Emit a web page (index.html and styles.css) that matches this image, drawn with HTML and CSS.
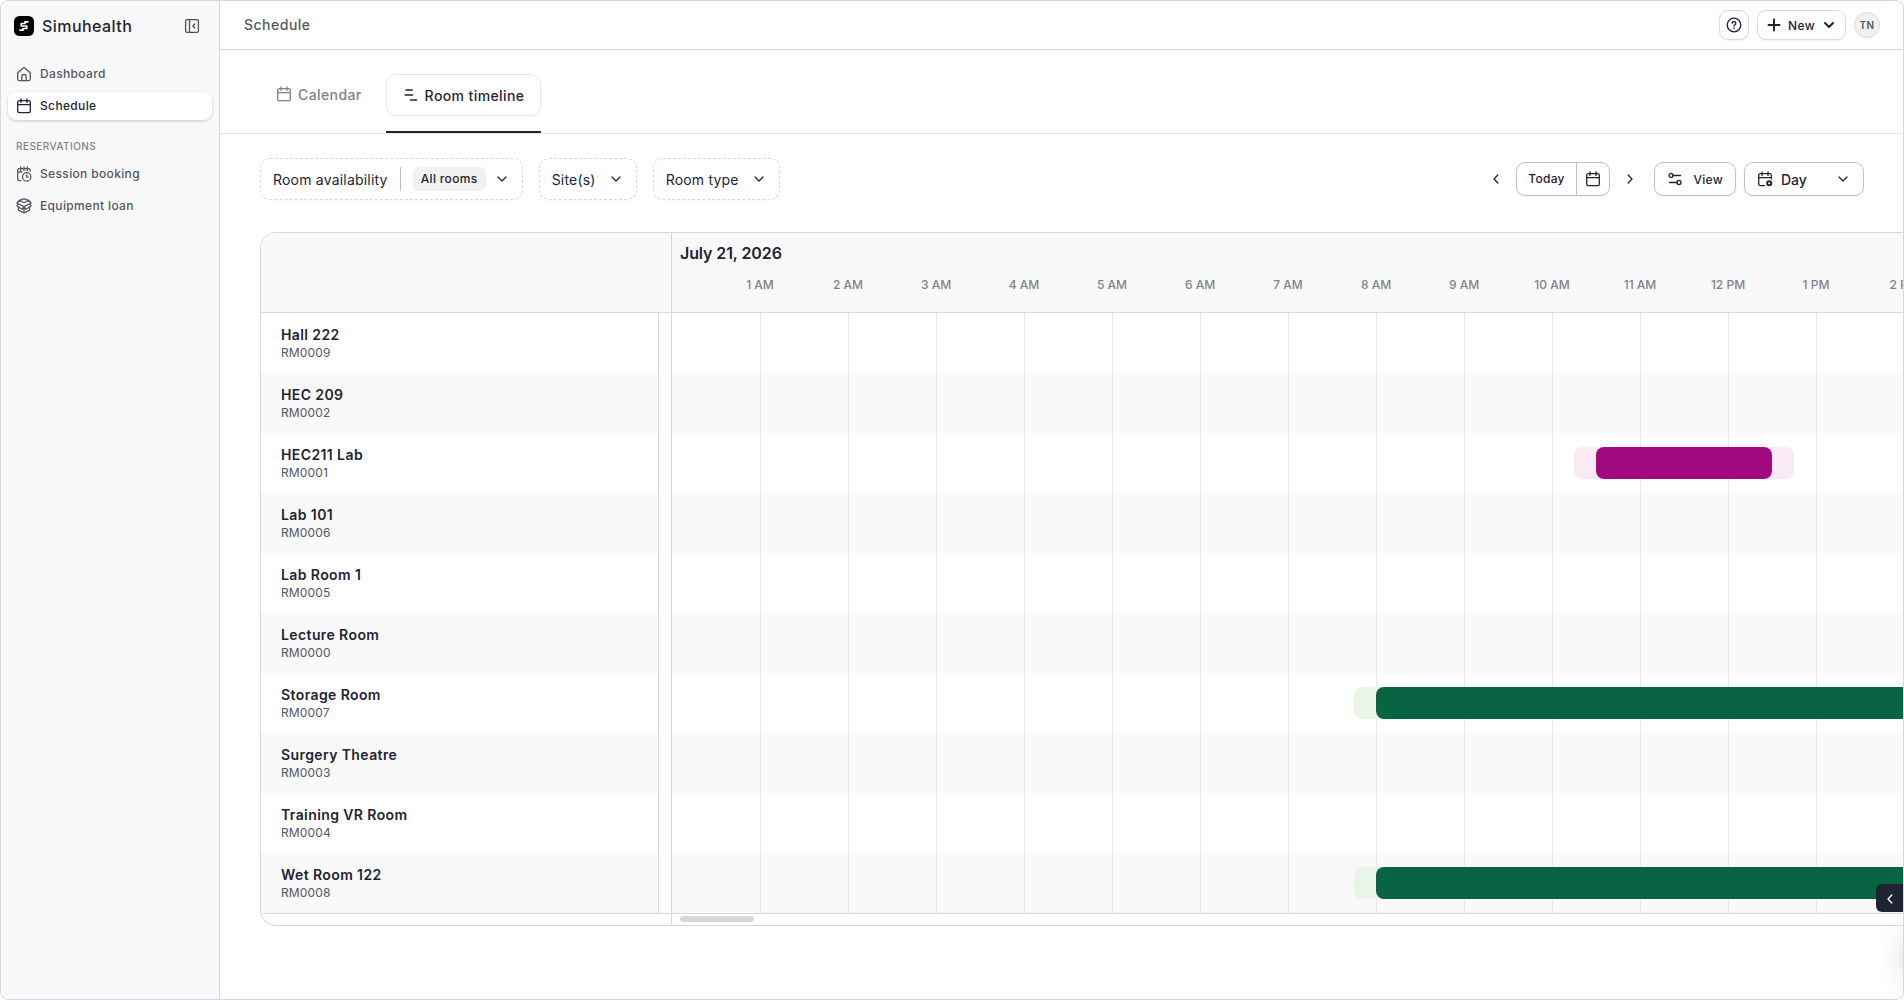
FILE: index.html
```html
<!DOCTYPE html>
<html lang="en">
<head>
  <meta charset="UTF-8">
  <meta name="viewport" content="width=device-width, initial-scale=1.0">
  <title>Schedule - Simuhealth</title>
  <link rel="stylesheet" href="styles.css">
</head>
<body>
  <!-- shared icons -->
  <svg class="icon-defs" width="0" height="0">
    <symbol id="icon-calendar" viewBox="0 0 16 16">
      <rect x="1.7" y="2.7" width="12.6" height="12" rx="1.6"/>
      <path d="M1.7 6.6h12.6M5 .8v3.6M11 .8v3.6"/>
    </symbol>
    <symbol id="icon-chevron-down" viewBox="0 0 16 16">
      <path d="M4 6l4 4 4-4"/>
    </symbol>
    <symbol id="icon-chevron-left" viewBox="0 0 16 16">
      <path d="M9.8 4L6 8l3.8 4"/>
    </symbol>
    <symbol id="icon-chevron-right" viewBox="0 0 16 16">
      <path d="M6.2 4L10 8l-3.8 4"/>
    </symbol>
  </svg>

  <div class="app">
    <aside class="sidebar">
      <div class="brand">
        <svg class="brand__logo" width="20" height="20" viewBox="0 0 20 20">
          <rect width="20" height="20" rx="5.5" fill="#000"/>
          <path d="M14.6 5.8h-3.6v1.700H7.300v2.500H12.700v2.500H9v1.700H5.400" fill="none" stroke="#fff" stroke-width="1.7" stroke-linejoin="round"/>
        </svg>
        <span class="brand__name">Simuhealth</span>
        <svg class="icon brand__toggle" width="16" height="16" viewBox="0 0 16 16">
          <rect x="1.6" y="1.6" width="12.8" height="12.8" rx="1.5"/>
          <path d="M5.500 1.600v12.800M10.800 6L8.800 8l2 2"/>
        </svg>
      </div>

      <nav class="nav">
        <a class="nav__item">
          <svg class="icon" width="16" height="16" viewBox="0 0 16 16">
            <path d="M1.700 6.800L8 1.400l6.300 5.400v6.300a1.500 1.500 0 0 1-1.500 1.500H3.200a1.500 1.500 0 0 1-1.500-1.500zM5.800 14.600v-4a2.200 2.200 0 0 1 4.400 0v4"/>
          </svg>
          <span>Dashboard</span>
        </a>
        <a class="nav__item nav__item--active">
          <svg class="icon" width="16" height="16"><use href="#icon-calendar"/></svg>
          <span>Schedule</span>
        </a>
        <div class="nav__title">RESERVATIONS</div>
        <a class="nav__item">
          <svg class="icon" width="16" height="16" viewBox="0 0 16 16">
            <path d="M4.800 14.600H3.200a1.500 1.500 0 0 1-1.500-1.500V4.200a1.500 1.500 0 0 1 1.500-1.500h9.600a1.500 1.500 0 0 1 1.500 1.500v1M1.700 6H6M4.700.8v3.600M8 .8v3.600M11.300.8v3.600"/>
            <circle cx="10.7" cy="10.9" r="4.2"/>
            <path d="M10.700 8.900v2.200h1.600"/>
          </svg>
          <span>Session booking</span>
        </a>
        <a class="nav__item">
          <svg class="icon" width="16" height="16" viewBox="0 0 16 16">
            <path d="M8 4.800L3.300 2.300.9 5l7.100 3.600L15.100 5l-2.400-2.700zM8 8.600l-1.800 2.600L.9 8l1.500-2M8 8.600l1.800 2.600L15.100 8l-1.500-2M2.400 9.200v3L8 15l5.600-2.800v-3M8 9v6M3.300 2.300L8 .9l4.700 1.400"/>
          </svg>
          <span>Equipment loan</span>
        </a>
      </nav>
    </aside>

    <main class="main">
      <header class="topbar">
        <h1 class="topbar__title">Schedule</h1>
        <div class="topbar__actions">
          <button class="btn btn--help">
            <svg class="icon" width="16" height="16" viewBox="0 0 16 16">
              <circle cx="8" cy="8" r="6.8"/>
              <path d="M6.200 6.300a1.800 1.800 0 1 1 2.600 1.600c-.6.3-.8.6-.8 1.200M8 11v.5"/>
            </svg>
          </button>
          <button class="btn btn--new">
            <svg class="icon icon--bold" width="16" height="16" viewBox="0 0 16 16"><path d="M8 2.500v11M2.500 8h11"/></svg>
            <span>New</span>
            <svg class="icon icon--bold" width="16" height="16"><use href="#icon-chevron-down"/></svg>
          </button>
          <div class="avatar">TN</div>
        </div>
      </header>

      <div class="tabs">
        <a class="tab">
          <span class="tab__label">
            <svg class="icon" width="16" height="16"><use href="#icon-calendar"/></svg>
            Calendar
          </span>
        </a>
        <a class="tab tab--active">
          <span class="tab__label">
            <svg class="icon icon--timeline" width="16" height="16" viewBox="0 0 16 16"><path d="M3 3h6.200M2.300 8h7.200M7.500 13h6"/></svg>
            Room timeline
          </span>
        </a>
      </div>

      <div class="toolbar">
        <div class="filters">
          <div class="filter">
            <span>Room availability</span>
            <span class="filter__divider"></span>
            <span class="filter__value">All rooms</span>
            <svg class="icon" width="16" height="16"><use href="#icon-chevron-down"/></svg>
          </div>
          <div class="filter">
            <span>Site(s)</span>
            <svg class="icon" width="16" height="16"><use href="#icon-chevron-down"/></svg>
          </div>
          <div class="filter">
            <span>Room type</span>
            <svg class="icon" width="16" height="16"><use href="#icon-chevron-down"/></svg>
          </div>
        </div>
        <div class="controls">
          <button class="arrow"><svg class="icon" width="16" height="16"><use href="#icon-chevron-left"/></svg></button>
          <div class="control control--date">
            <span class="control__today">Today</span>
            <span class="control__picker"><svg class="icon" width="16" height="16"><use href="#icon-calendar"/></svg></span>
          </div>
          <button class="arrow"><svg class="icon" width="16" height="16"><use href="#icon-chevron-right"/></svg></button>
          <button class="control control--view">
            <svg class="icon" width="16" height="16" viewBox="0 0 16 16">
              <circle cx="4" cy="4.5" r="2"/>
              <circle cx="12" cy="11.5" r="2"/>
              <path d="M6 4.500h7.500M2.500 11.500H10"/>
            </svg>
            <span>View</span>
          </button>
          <button class="control control--range">
            <svg class="icon" width="16" height="16" viewBox="0 0 16 16">
              <path d="M7.500 14.600H3.200a1.500 1.500 0 0 1-1.500-1.500V4.200a1.500 1.500 0 0 1 1.500-1.500h9.600a1.500 1.500 0 0 1 1.500 1.500V8M1.700 6.600h12.600M5 .8v3.600M11 .8v3.600"/>
              <circle cx="12.2" cy="12.3" r="2" stroke-width="2"/>
            </svg>
            <span>Day</span>
            <svg class="icon control__caret" width="16" height="16"><use href="#icon-chevron-down"/></svg>
          </button>
        </div>
      </div>

      <section class="timeline">
        <div class="timeline__rooms">
          <div class="timeline__corner"></div>
          <div class="rooms" id="rooms"></div>
          <div class="timeline__foot"></div>
        </div>
        <div class="timeline__grid">
          <div class="timeline__head">
            <div class="timeline__date">July 21, 2026</div>
            <div class="hours" id="hours"></div>
          </div>
          <div class="lanes" id="lanes"></div>
          <div class="timeline__foot"><div class="scroll-thumb"></div></div>
        </div>
      </section>
    </main>

    <button class="drawer-toggle"><svg class="icon" width="16" height="16"><use href="#icon-chevron-left"/></svg></button>
    <div class="widget-shadow"></div>
  </div>

  <script src="script.js"></script>
</body>
</html>
```
FILE: styles.css
```css
* {
  box-sizing: border-box;
}

body {
  margin: 0;
  background: #fff;
  font-family: Inter, "Liberation Sans", sans-serif;
  font-size: 14px;
  color: #1f2433;
}

button {
  font: inherit;
  color: inherit;
  background: #fff;
  padding: 0;
}

.icon-defs {
  position: absolute;
}

.icon {
  flex: none;
  fill: none;
  stroke: currentColor;
  stroke-width: 1.3;
  stroke-linecap: round;
  stroke-linejoin: round;
}

.icon--bold {
  stroke-width: 2;
}

.icon--timeline {
  stroke-width: 1.6;
}

.app {
  position: relative;
  display: flex;
  height: 1000px;
  border: 1px solid #d7d8dd;
  border-radius: 8px;
  overflow: hidden;
}

/* Sidebar */
.sidebar {
  width: 219px;
  flex: none;
  background: #f9f9f9;
  border-right: 1px solid #d7d8dc;
}

.brand {
  display: flex;
  align-items: center;
  height: 50px;
  padding: 0 19px 0 13px;
}

.brand__name {
  margin-left: 8px;
  font-size: 16px;
  font-weight: 500;
  letter-spacing: 0.45px;
}

.brand__toggle {
  margin-left: auto;
  color: #4a4f5e;
}

.nav {
  display: flex;
  flex-direction: column;
  gap: 4px;
  padding: 9px 7px 0 7px;
}

.nav__item {
  display: flex;
  align-items: center;
  gap: 8px;
  height: 28px;
  padding: 0 8px;
  border-radius: 8px;
  font-size: 12px;
  font-weight: 500;
  letter-spacing: 0.35px;
  color: #535763;
}

.nav__item span {
  padding-bottom: 1px;
}

.nav__item--active {
  background: #fff;
  color: #1f2433;
  box-shadow: 0 1px 3px rgba(0, 0, 0, 0.2);
}

.nav__title {
  height: 30px;
  padding: 12px 8px 0;
  margin-bottom: 2px;
  font-size: 10px;
  line-height: 20px;
  font-weight: 500;
  letter-spacing: 0.45px;
  color: #7e828d;
}

/* Top bar */
.main {
  flex: 1;
  min-width: 0;
}

.topbar {
  display: flex;
  align-items: center;
  justify-content: space-between;
  height: 49px;
  padding: 0 23px 0 24px;
  border-bottom: 1px solid #d7d8dc;
}

.topbar__title {
  margin: 0 0 1px;
  font-size: 14px;
  font-weight: 500;
  letter-spacing: 0.5px;
  color: #535763;
}

.topbar__actions {
  display: flex;
  align-items: center;
  gap: 8px;
}

.btn {
  display: flex;
  align-items: center;
  justify-content: center;
  height: 30px;
  border: 1px solid #d9dade;
  border-radius: 9px;
  box-shadow: 0 1px 2px rgba(0, 0, 0, 0.05);
}

.btn--help {
  width: 30px;
}

.btn--new {
  width: 89px;
  gap: 6px;
  font-size: 12px;
  font-weight: 500;
  letter-spacing: 0.3px;
}

.avatar {
  width: 26px;
  height: 26px;
  border: 1px solid #d9dade;
  border-radius: 50%;
  background: #f1f1f1;
  font-size: 10px;
  line-height: 25px;
  font-weight: 600;
  letter-spacing: 0.3px;
  text-align: center;
  color: #535763;
}

/* Tabs */
.tabs {
  display: flex;
  height: 84px;
  padding: 24px 40px 0;
  border-bottom: 1px solid #e8e8ea;
}

.tab {
  height: 59px;
  color: #7e828d;
}

.tab__label {
  display: flex;
  align-items: center;
  gap: 6px;
  height: 40px;
  padding: 0 24px 0 16px;
  font-weight: 500;
  letter-spacing: 0.4px;
}

.tab--active {
  border-bottom: 2px solid #1f2433;
  color: #1f2433;
}

.tab--active .tab__label {
  height: 42px;
  padding: 0 16px;
  border: 1px solid #e8e8ea;
  border-radius: 10px;
  box-shadow: 0 1px 2px rgba(0, 0, 0, 0.05);
}

/* Filters and date controls */
.toolbar {
  display: flex;
  justify-content: space-between;
  align-items: flex-start;
  height: 98px;
  padding: 24px 39px 0 40px;
}

.filters {
  display: flex;
  gap: 16px;
}

.filter {
  display: flex;
  align-items: center;
  gap: 12px;
  height: 42px;
  padding: 0 12px;
  border: 1px dashed #d7d8dc;
  border-radius: 10px;
  letter-spacing: 0.2px;
  box-shadow: 0 1px 2px rgba(0, 0, 0, 0.04);
}

.filter__divider {
  width: 1px;
  height: 24px;
  background: #c0c1c8;
}

.filter__value {
  height: 24px;
  padding: 0 8px;
  margin-right: -4px;
  border-radius: 6px;
  background: #f1f1f1;
  font-size: 12px;
  line-height: 24px;
  font-weight: 500;
  letter-spacing: 0.36px;
}

.controls {
  display: flex;
  align-items: center;
  height: 42px;
}

.arrow {
  display: flex;
  justify-content: center;
  width: 40px;
  border: 0;
}

.control {
  display: flex;
  align-items: center;
  height: 34px;
  border: 1px solid #c0c1c8;
  border-radius: 9px;
  font-size: 12px;
  font-weight: 500;
  letter-spacing: 0.3px;
  box-shadow: 0 1px 2px rgba(0, 0, 0, 0.05);
}

.control__today {
  width: 60px;
  height: 32px;
  line-height: 32px;
  text-align: center;
  border-right: 1px solid #c0c1c8;
}

.control__picker {
  display: flex;
  justify-content: center;
  width: 32px;
}

.control--view {
  width: 82px;
  margin-left: 4px;
  padding: 0 12px;
  justify-content: space-between;
}

.control--range {
  width: 120px;
  margin-left: 8px;
  padding: 0 12px;
  gap: 8px;
  font-size: 14px;
  letter-spacing: 0;
}

.control__caret {
  margin-left: auto;
}

/* Timeline */
.timeline {
  display: flex;
  height: 694px;
  margin-left: 40px;
  border: 1px solid #d7d8dc;
  border-right: 0;
  border-radius: 16px 0 0 16px;
  overflow: hidden;
}

.timeline__rooms {
  width: 411px;
  flex: none;
  border-right: 1px solid #d7d8dc;
}

.timeline__corner,
.timeline__head {
  height: 80px;
  background: #f9f9f9;
  border-bottom: 1px solid #d7d8dc;
}

.timeline__grid {
  flex: 1;
  min-width: 0;
  overflow: hidden;
}

.timeline__date {
  padding: 10px 8px 0;
  font-size: 16px;
  line-height: 20px;
  font-weight: 600;
  letter-spacing: -0.1px;
}

.hours {
  display: flex;
  margin-left: 44px;
  padding-top: 14px;
}

.hours__label {
  width: 88px;
  flex: none;
  font-size: 12px;
  line-height: 16px;
  font-weight: 500;
  text-align: center;
  color: #7e828d;
}

.rooms {
  width: 398px;
  border-right: 1px solid #d7d8dc;
}

.room {
  height: 60px;
  padding: 13px 20px 0;
}

.room:nth-child(even),
.lane:nth-child(even) {
  background: #f9f9f9;
}

.room__name {
  font-weight: 600;
  line-height: 18px;
  letter-spacing: 0.4px;
}

.room__code {
  font-size: 12px;
  line-height: 18px;
  letter-spacing: 0.15px;
  color: #535763;
}

.lane {
  display: flex;
  position: relative;
  height: 60px;
}

.lane__slot {
  width: 88px;
  flex: none;
  border-right: 1px solid #e8e8ea;
}

.lane__slot:first-child {
  width: 89px;
}

.booking {
  position: absolute;
  top: 14px;
  display: flex;
  height: 32px;
  padding: 0 22px;
  border-radius: 8px;
}

.booking__bar {
  flex: 1;
  border-radius: 8px;
}

.booking--purple {
  background: #f9eaf4;
}

.booking--purple .booking__bar {
  background: #a00a7e;
}

.booking--green {
  background: #e9f6e7;
}

.booking--green .booking__bar {
  background: #096443;
}

.timeline__foot {
  height: 12px;
  padding: 2px 8px;
  border-top: 1px solid #d7d8dc;
}

.scroll-thumb {
  width: 74px;
  height: 6px;
  border-radius: 3px;
  background: #d7d8dc;
}

/* Floating items on the right edge */
.drawer-toggle {
  position: absolute;
  right: 0;
  top: 883px;
  display: flex;
  align-items: center;
  width: 27px;
  height: 28px;
  padding: 2px 0 0 6px;
  border: 0;
  border-radius: 6px 0 0 6px;
  background: #1f2433;
  color: #fff;
}

.widget-shadow {
  position: absolute;
  right: -50px;
  top: 931px;
  width: 50px;
  height: 50px;
  border-radius: 50%;
  box-shadow: 0 1px 6px rgba(0, 0, 0, 0.06), 0 2px 32px rgba(0, 0, 0, 0.16);
}
```
FILE: script.js
```js
const hourWidth = 88;

const rooms = [
  { name: 'Hall 222', code: 'RM0009' },
  { name: 'HEC 209', code: 'RM0002' },
  { name: 'HEC211 Lab', code: 'RM0001', booking: { start: 10.5, end: 12.5, color: 'purple' } },
  { name: 'Lab 101', code: 'RM0006' },
  { name: 'Lab Room 1', code: 'RM0005' },
  { name: 'Lecture Room', code: 'RM0000' },
  { name: 'Storage Room', code: 'RM0007', booking: { start: 8, end: 17, color: 'green' } },
  { name: 'Surgery Theatre', code: 'RM0003' },
  { name: 'Training VR Room', code: 'RM0004' },
  { name: 'Wet Room 122', code: 'RM0008', booking: { start: 8, end: 17, color: 'green' } }
];

let hours = '';
for (let h = 1; h <= 14; h++) {
  hours += `<div class="hours__label">${h > 12 ? h - 12 : h} ${h < 12 ? 'AM' : 'PM'}</div>`;
}
document.getElementById('hours').innerHTML = hours;

document.getElementById('rooms').innerHTML = rooms.map(room => `
  <div class="room">
    <div class="room__name">${room.name}</div>
    <div class="room__code">${room.code}</div>
  </div>`).join('');

// each booking has 15 minutes of setup and teardown around it
function bookingHtml(b) {
  const left = (b.start - 0.25) * hourWidth;
  const width = (b.end - b.start + 0.5) * hourWidth;
  return `<div class="booking booking--${b.color}" style="left:${left}px;width:${width}px"><div class="booking__bar"></div></div>`;
}

document.getElementById('lanes').innerHTML = rooms.map(room => `
  <div class="lane">${'<div class="lane__slot"></div>'.repeat(14)}${room.booking ? bookingHtml(room.booking) : ''}</div>`).join('');
```
